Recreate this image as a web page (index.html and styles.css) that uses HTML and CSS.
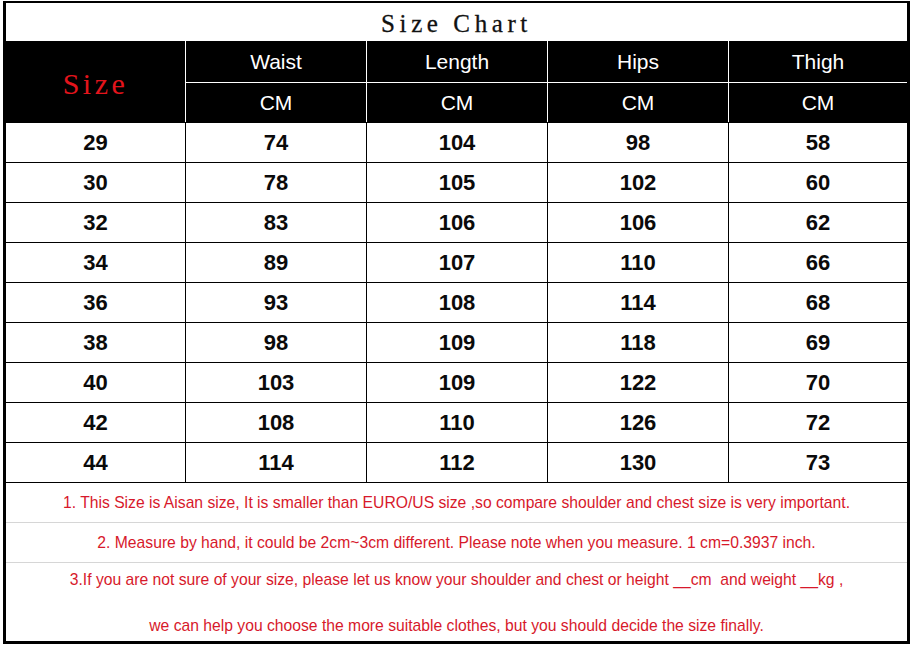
FILE: index.html
```html
<!DOCTYPE html>
<html lang="en">
<head>
<meta charset="utf-8">
<title>Size Chart</title>
<link rel="stylesheet" href="styles.css">
</head>
<body>
<div class="chart">
  <div class="title">Size Chart</div>

  <div class="size-head">Size</div>
  <div class="head first">Waist</div>
  <div class="head">Length</div>
  <div class="head">Hips</div>
  <div class="head">Thigh</div>
  <div class="unit first">CM</div>
  <div class="unit">CM</div>
  <div class="unit">CM</div>
  <div class="unit">CM</div>

  <div class="cell lead">29</div><div class="cell">74</div><div class="cell">104</div><div class="cell">98</div><div class="cell">58</div>
  <div class="cell lead">30</div><div class="cell">78</div><div class="cell">105</div><div class="cell">102</div><div class="cell">60</div>
  <div class="cell lead">32</div><div class="cell">83</div><div class="cell">106</div><div class="cell">106</div><div class="cell">62</div>
  <div class="cell lead">34</div><div class="cell">89</div><div class="cell">107</div><div class="cell">110</div><div class="cell">66</div>
  <div class="cell lead">36</div><div class="cell">93</div><div class="cell">108</div><div class="cell">114</div><div class="cell">68</div>
  <div class="cell lead">38</div><div class="cell">98</div><div class="cell">109</div><div class="cell">118</div><div class="cell">69</div>
  <div class="cell lead">40</div><div class="cell">103</div><div class="cell">109</div><div class="cell">122</div><div class="cell">70</div>
  <div class="cell lead">42</div><div class="cell">108</div><div class="cell">110</div><div class="cell">126</div><div class="cell">72</div>
  <div class="cell lead">44</div><div class="cell">114</div><div class="cell">112</div><div class="cell">130</div><div class="cell">73</div>

  <div class="note note-first">1. This Size is Aisan size, It is smaller than EURO/US size ,so compare shoulder and chest size is very important.</div>
  <div class="note">2. Measure by hand, it could be 2cm~3cm different. Please note when you measure. 1 cm=0.3937 inch.</div>
  <div class="note note-tall">
    <span>3.If you are not sure of your size, please let us know your shoulder and chest or height __cm&nbsp; and weight __kg ,</span>
    <span>we can help you choose the more suitable clothes, but you should decide the size finally.</span>
  </div>
</div>
</body>
</html>
```

FILE: styles.css
```css
* {
  box-sizing: border-box;
}

html, body {
  margin: 0;
  padding: 0;
  background: #ffffff;
}

body {
  font-family: "Liberation Sans", Arial, sans-serif;
}

.chart {
  margin: 1px 0 0 3px;
  width: 907px;
  border-style: solid;
  border-color: #000;
  border-width: 2px 3px 3px 3px;
  display: grid;
  grid-template-columns: 179px 181px 181px 181px 179px;
  grid-template-rows: 38px 41px 40px repeat(9, 40px) 40px 40px 79px;
}

.title {
  grid-column: 1 / -1;
  display: flex;
  align-items: center;
  justify-content: center;
  font-family: "Liberation Serif", "Times New Roman", serif;
  font-size: 25px;
  letter-spacing: 4.6px;
  color: #111;
  padding-top: 4px;
  -webkit-text-stroke: 0.3px #111;
}

.size-head {
  grid-row: 2 / 4;
  grid-column: 1;
  background: #000;
  color: #e3141c;
  font-family: "Liberation Serif", "Times New Roman", serif;
  font-size: 30px;
  letter-spacing: 3.5px;
  display: flex;
  align-items: center;
  justify-content: center;
  padding-top: 4px;
}

.head,
.unit {
  background: #000;
  color: #fff;
  font-size: 21px;
  display: flex;
  align-items: center;
  justify-content: center;
  border-left: 1px solid #fff;
}

.unit {
  border-top: 1px solid #fff;
}

.cell {
  border-top: 1px solid #000;
  border-left: 1px solid #000;
  display: flex;
  align-items: center;
  justify-content: center;
  font-weight: bold;
  font-size: 22px;
  color: #0a0a0a;
}

.cell.lead {
  border-left: none;
}

.note {
  grid-column: 1 / -1;
  border-top: 1px solid #d6d6d6;
  display: flex;
  align-items: center;
  justify-content: center;
  color: #d7192b;
  font-size: 15.7px;
}

.note-first {
  border-top: 1px solid #000;
}

.note-tall {
  flex-direction: column;
  justify-content: flex-start;
  gap: 28px;
  padding-top: 8px;
}
```
